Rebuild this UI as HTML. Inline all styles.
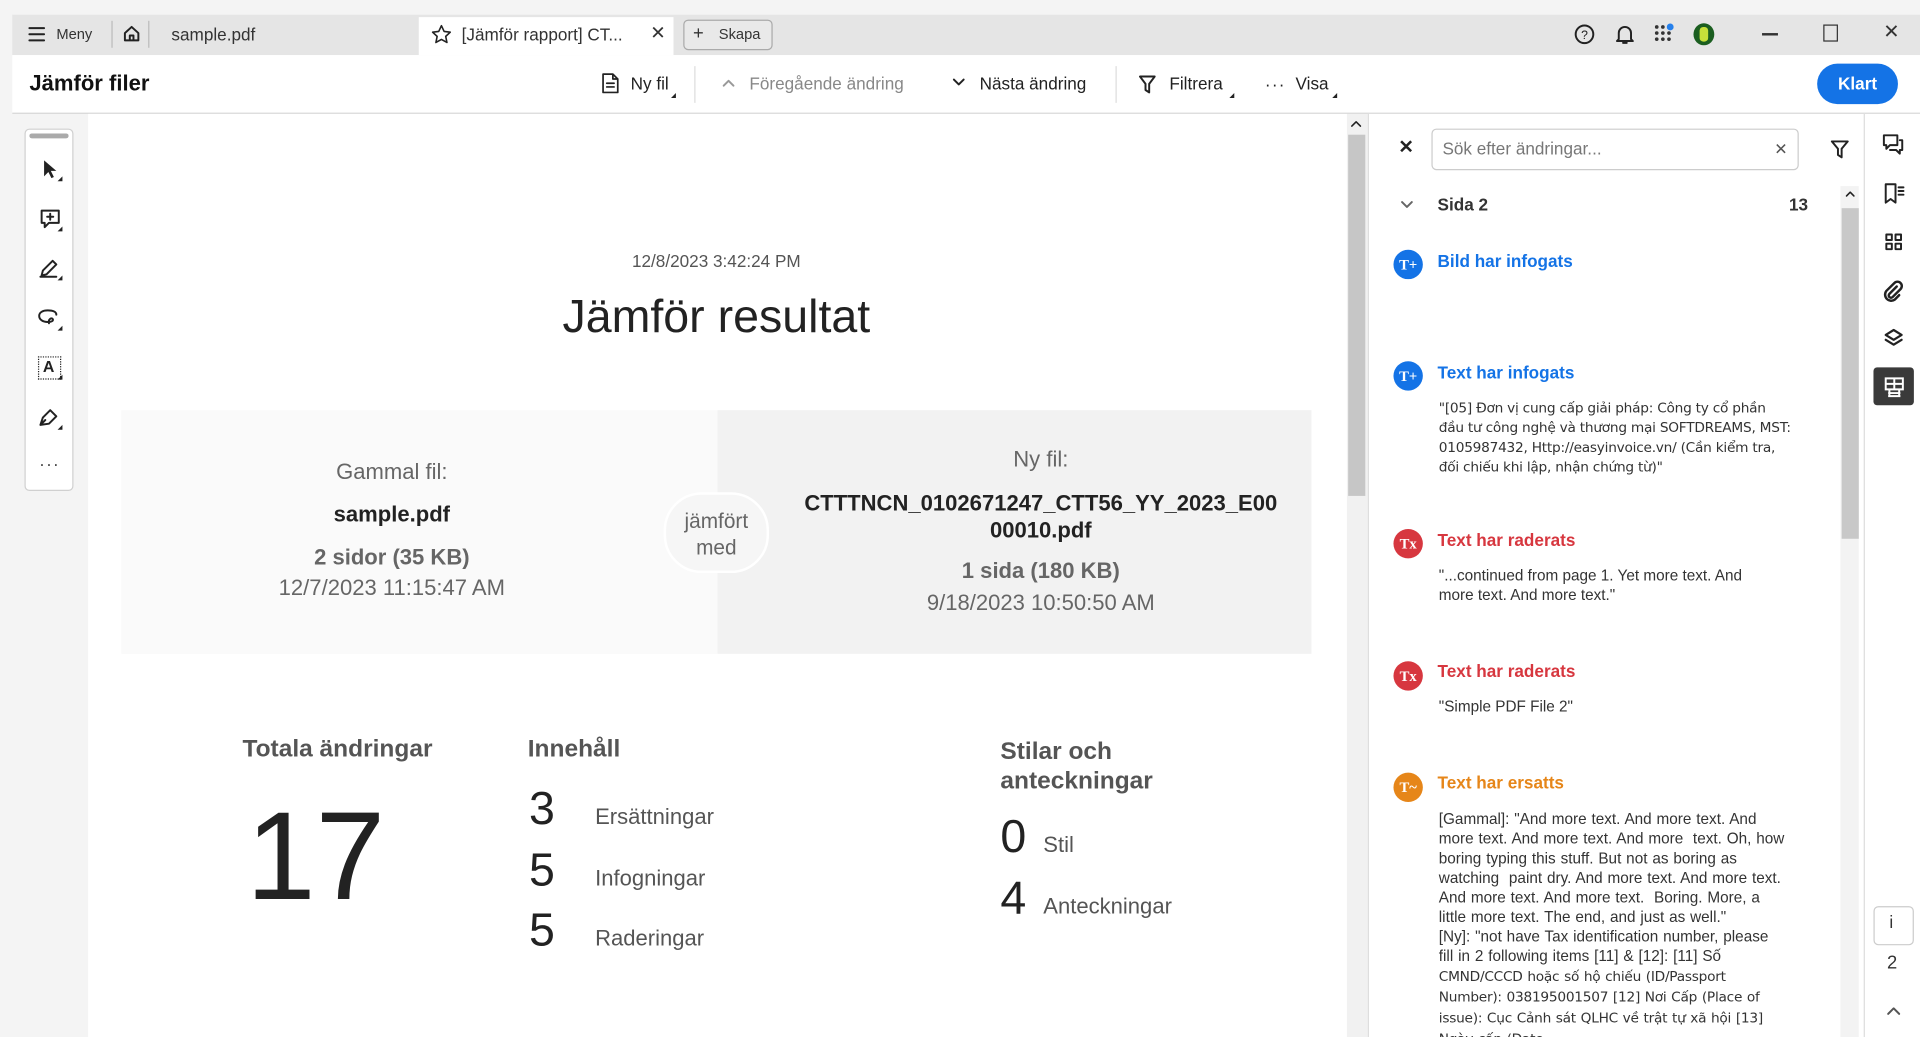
<!DOCTYPE html>
<html><head><meta charset="utf-8"><style>
html,body{margin:0;padding:0;width:1920px;height:1037px;overflow:hidden;background:#f4f4f4}
#s{position:absolute;left:0;top:0;width:1568px;height:847px;transform:scale(1.22449);transform-origin:0 0;font-family:"Liberation Sans",Arial,sans-serif;color:#222;background:#f4f4f4;overflow:hidden}
.a{position:absolute;white-space:nowrap}
.t{position:absolute;white-space:nowrap;line-height:1}
.c{text-align:center}
svg{position:absolute;overflow:visible}
.ic{stroke:#222;fill:none;stroke-width:1.6;stroke-linecap:round;stroke-linejoin:round}
.tri{position:absolute;width:0;height:0;border-left:4px solid transparent;border-bottom:4px solid #222}
.title{font-size:14px;font-weight:bold}
.body{font-size:12.5px;color:#333;line-height:16px;white-space:normal;width:300px}
.viet{font-family:"DejaVu Sans",sans-serif;font-size:11.2px;letter-spacing:-0.2px}
.circ{position:absolute;width:24px;height:24px;border-radius:50%;color:#fff;font:bold 12px "Liberation Serif",serif;text-align:center;line-height:24px}
</style></head><body><div id="s">
<div class="a" style="left:10px;top:12px;width:1558px;height:33px;background:#e5e5e5"></div>
<svg style="left:23px;top:21px" width="14" height="14"><path class="ic" d="M1 2h12M1 7h12M1 12h12"/></svg>
<div class="t" style="left:46px;top:22px;font-size:12px;color:#333">Meny</div>
<div class="a" style="left:91px;top:17px;width:1px;height:22px;background:#bbb"></div>
<svg style="left:100px;top:20px" width="15" height="15"><path class="ic" d="M2 7L7.5 2 13 7V13H2Z M6 13V9h3v4"/></svg>
<div class="a" style="left:121px;top:17px;width:1px;height:22px;background:#bbb"></div>
<div class="t" style="left:140px;top:21px;font-size:14px;color:#333">sample.pdf</div>
<div class="a" style="left:342px;top:14px;width:208px;height:31px;background:#fff"></div>
<svg style="left:352px;top:20px" width="17" height="17"><path class="ic" style="stroke-width:1.3" d="M8.5 1l2.2 4.7 5 .6-3.7 3.4 1 5L8.5 12.2 4 14.7l1-5L1.3 6.3l5-.6z"/></svg>
<div class="t" style="left:377px;top:21px;font-size:14px;color:#333">[Jämför rapport] CT...</div>
<div class="t" style="left:531px;top:20px;font-size:15px;color:#333">✕</div>
<div class="a" style="left:558px;top:16px;width:71px;height:23px;border:1px solid #aaa;border-radius:4px;background:#e9e9e9"></div>
<div class="t" style="left:566px;top:20px;font-size:15px;color:#333">+</div>
<div class="t" style="left:587px;top:22px;font-size:12px;color:#333">Skapa</div>
<svg style="left:1286px;top:20px" width="16" height="16"><circle class="ic" cx="8" cy="8" r="7.2"/><text x="8" y="12" font-size="10" text-anchor="middle" font-family="Liberation Sans" fill="#222">?</text></svg>
<svg style="left:1319px;top:19px" width="16" height="18"><path class="ic" d="M3 13V8a5 5 0 0 1 10 0v5l1.5 1.5h-13zM6.5 16h3"/></svg>
<svg style="left:1351px;top:20px" width="16" height="16"><g fill="#333"><circle cx="2" cy="2" r="1.5"/><circle cx="7" cy="2" r="1.5"/><circle cx="2" cy="7" r="1.5"/><circle cx="7" cy="7" r="1.5"/><circle cx="12" cy="7" r="1.5"/><circle cx="2" cy="12" r="1.5"/><circle cx="7" cy="12" r="1.5"/><circle cx="12" cy="12" r="1.5"/></g><circle cx="13" cy="2" r="2.8" fill="#2680eb"/></svg>
<div class="a" style="left:1383px;top:19px;width:17px;height:18px;border-radius:50%;background:#1b5e20"></div>
<div class="a" style="left:1388px;top:22px;width:7px;height:12px;border-radius:3px;background:#c6e03a"></div>
<div class="a" style="left:1439px;top:27px;width:13px;height:2px;background:#333"></div>
<div class="a" style="left:1489px;top:20px;width:10px;height:12px;border:1.5px solid #333"></div>
<div class="t" style="left:1538px;top:19px;font-size:16px;color:#333">✕</div>
<div class="a" style="left:10px;top:45px;width:1558px;height:47px;background:#fff;border-bottom:1px solid #d5d5d5"></div>
<div class="t" style="left:24px;top:59px;font-size:18px;font-weight:bold;color:#111">Jämför filer</div>
<svg style="left:491px;top:59px" width="15" height="18"><path class="ic" style="stroke-width:1.4" d="M1.5 1.5h8l4 4v11h-12z M9.5 1.5v4h4 M4.5 9h6M4.5 12h6"/></svg>
<div class="t" style="left:515px;top:61px;font-size:14px;color:#222">Ny fil</div>
<div class="tri" style="left:548px;top:76px"></div>
<div class="a" style="left:567px;top:54px;width:1px;height:30px;background:#ddd"></div>
<svg style="left:590px;top:64px" width="10" height="7"><path class="ic" style="stroke:#999" d="M1 6l4-4 4 4"/></svg>
<div class="t" style="left:612px;top:61px;font-size:14px;color:#888">Föregående ändring</div>
<svg style="left:778px;top:64px" width="10" height="7"><path class="ic" d="M1 1l4 4 4-4"/></svg>
<div class="t" style="left:800px;top:61px;font-size:14px;color:#222">Nästa ändring</div>
<div class="a" style="left:911px;top:54px;width:1px;height:30px;background:#ddd"></div>
<svg style="left:930px;top:61px" width="14" height="16"><path class="ic" d="M1 1.5h12L8.5 7.5v7l-3-2v-5z"/></svg>
<div class="t" style="left:955px;top:61px;font-size:14px;color:#222">Filtrera</div>
<div class="tri" style="left:1004px;top:76px"></div>
<div class="t" style="left:1033px;top:62px;font-size:14px;color:#222;letter-spacing:1px">···</div>
<div class="t" style="left:1058px;top:61px;font-size:14px;color:#222">Visa</div>
<div class="tri" style="left:1088px;top:76px"></div>
<div class="a" style="left:1484px;top:52px;width:66px;height:33px;border-radius:17px;background:#1473e6;color:#fff;font-weight:bold;font-size:14px;text-align:center;line-height:33px">Klart</div>
<div class="a" style="left:20px;top:105px;width:38px;height:294px;background:#fff;border:1px solid #d0d0d0;border-radius:4px"></div>
<div class="a" style="left:24px;top:109px;width:32px;height:4px;border-radius:2px;background:#aaa"></div>
<svg style="left:34px;top:130px" width="16" height="18"><path d="M2 1v13l3.5-3.5 2.5 5 2-1-2.5-5H12z" fill="#222"/></svg>
<div class="tri" style="left:47px;top:144px"></div>
<svg style="left:32px;top:170px" width="18" height="18"><path class="ic" d="M2 2h14v10H8l-3.5 3.5V12H2z M9 4.5v5M6.5 7h5"/></svg>
<div class="tri" style="left:47px;top:185px"></div>
<svg style="left:31px;top:210px" width="18" height="18"><path class="ic" d="M3 15l1-4 8-8 3 3-8 8z M2 16h13" /></svg>
<div class="tri" style="left:47px;top:225px"></div>
<svg style="left:31px;top:252px" width="18" height="16"><path class="ic" d="M15 5c0-2.5-3-3.5-7-3.5S1 3 1 6s3 5 7 5c3 0 5-1 4-2.5S8 9 9 12"/></svg>
<div class="tri" style="left:47px;top:266px"></div>
<div class="a" style="left:31px;top:291px;width:17px;height:17px;border:1.5px dotted #222"></div>
<div class="t" style="left:35px;top:293px;font-size:13px;font-weight:bold">A</div>
<div class="tri" style="left:47px;top:306px"></div>
<svg style="left:31px;top:332px" width="18" height="18"><path class="ic" d="M2 15l2-6 6-6 5 5-6 6z M2 15l4-4"/></svg>
<div class="tri" style="left:47px;top:347px"></div>
<div class="t" style="left:32px;top:372px;font-size:14px;color:#444;letter-spacing:1px">···</div>
<div class="a" style="left:72px;top:93px;width:1028px;height:754px;background:#fff"></div>
<div class="a" style="left:1100px;top:93px;width:17px;height:754px;background:#f1f1f1"></div>
<div class="a" style="left:1101px;top:110px;width:14px;height:295px;background:#c6c6c6"></div>
<svg style="left:1103px;top:98px" width="9" height="6"><path class="ic" style="stroke-width:1.3" d="M1 5l3.5-3.5L8 5"/></svg>
<div class="t c" style="left:385px;top:206px;width:400px;font-size:14px;color:#555">12/8/2023 3:42:24 PM</div>
<div class="t c" style="left:285px;top:240px;width:600px;font-size:38px;color:#222">Jämför resultat</div>
<div class="a" style="left:99px;top:335px;width:487px;height:199px;background:#fafafa"></div>
<div class="a" style="left:586px;top:335px;width:485px;height:199px;background:#f2f2f2"></div>
<div class="a" style="left:542px;top:402px;width:82px;height:62px;border-radius:31px;background:#f6f6f6;border:2px solid #fff"></div>
<div class="t c" style="left:535px;top:415px;width:100px;font-size:17px;color:#666;line-height:22px">jämfört<br>med</div>
<div class="t c" style="left:170px;top:376px;width:300px;font-size:18px;color:#666">Gammal fil:</div>
<div class="t c" style="left:170px;top:411px;width:300px;font-size:18px;font-weight:bold;color:#222">sample.pdf</div>
<div class="t c" style="left:170px;top:446px;width:300px;font-size:18px;font-weight:bold;color:#666">2 sidor (35 KB)</div>
<div class="t c" style="left:170px;top:471px;width:300px;font-size:18px;color:#666">12/7/2023 11:15:47 AM</div>
<div class="t c" style="left:650px;top:366px;width:400px;font-size:18px;color:#666">Ny fil:</div>
<div class="t c" style="left:630px;top:400px;width:440px;font-size:18px;font-weight:bold;color:#222;line-height:22px">CTTTNCN_0102671247_CTT56_YY_2023_E00<br>00010.pdf</div>
<div class="t c" style="left:650px;top:457px;width:400px;font-size:18px;font-weight:bold;color:#666">1 sida (180 KB)</div>
<div class="t c" style="left:650px;top:483px;width:400px;font-size:18px;color:#666">9/18/2023 10:50:50 AM</div>
<div class="t" style="left:198px;top:602px;font-size:20px;font-weight:bold;color:#555">Totala ändringar</div>
<div class="t" style="left:201px;top:648px;font-size:102px;color:#222">17</div>
<div class="t" style="left:431px;top:602px;font-size:20px;font-weight:bold;color:#555">Innehåll</div>
<div class="t" style="left:432px;top:642px;font-size:38px;color:#222">3</div>
<div class="t" style="left:486px;top:658px;font-size:18px;color:#555">Ersättningar</div>
<div class="t" style="left:432px;top:692px;font-size:38px;color:#222">5</div>
<div class="t" style="left:486px;top:708px;font-size:18px;color:#555">Infogningar</div>
<div class="t" style="left:432px;top:741px;font-size:38px;color:#222">5</div>
<div class="t" style="left:486px;top:757px;font-size:18px;color:#555">Raderingar</div>
<div class="t" style="left:817px;top:602px;font-size:20px;font-weight:bold;color:#555;line-height:24px">Stilar och<br>anteckningar</div>
<div class="t" style="left:817px;top:665px;font-size:38px;color:#222">0</div>
<div class="t" style="left:852px;top:681px;font-size:18px;color:#555">Stil</div>
<div class="t" style="left:817px;top:715px;font-size:38px;color:#222">4</div>
<div class="t" style="left:852px;top:731px;font-size:18px;color:#555">Anteckningar</div>
<div class="a" style="left:1117px;top:93px;width:405px;height:754px;background:#fff;border-left:1px solid #ddd"></div>
<div class="t" style="left:1142px;top:113px;font-size:15px;font-weight:bold;color:#222">✕</div>
<div class="a" style="left:1169px;top:105px;width:298px;height:32px;border:1px solid #ccc;border-radius:4px;background:#fff"></div>
<div class="t" style="left:1178px;top:114px;font-size:14px;color:#777">Sök efter ändringar...</div>
<div class="t" style="left:1449px;top:115px;font-size:13px;color:#555">✕</div>
<svg style="left:1495px;top:114px" width="15" height="16"><path class="ic" d="M1 1.5h13L9 7.5v7l-3-2v-5z"/></svg>
<div class="a" style="left:1503px;top:152px;width:15px;height:695px;background:#f3f3f3"></div>
<div class="a" style="left:1504px;top:170px;width:14px;height:270px;background:#c8c8c8"></div>
<svg style="left:1507px;top:155px" width="8" height="6"><path class="ic" style="stroke-width:1.3" d="M1 5l3-3 3 3"/></svg>
<svg style="left:1144px;top:164px" width="10" height="6"><path class="ic" style="stroke:#666" d="M1 1l4 4 4-4"/></svg>
<div class="t" style="left:1174px;top:160px;font-size:14px;font-weight:bold;color:#333">Sida 2</div>
<div class="t" style="left:1461px;top:160px;font-size:14px;font-weight:bold;color:#333">13</div>
<div class="circ" style="left:1138px;top:204px;background:#1473e6">T+</div>
<div class="t title" style="left:1174px;top:206px;color:#1473e6">Bild har infogats</div>
<div class="circ" style="left:1138px;top:295px;background:#1473e6">T+</div>
<div class="t title" style="left:1174px;top:297px;color:#1473e6">Text har infogats</div>
<div class="a body viet" style="left:1175px;top:326px;width:288px">"[05] Đơn vị cung cấp giải pháp: Công ty cổ phần đầu tư công nghệ và thương mại SOFTDREAMS, MST: 0105987432, Http://easyinvoice.vn/ (Cần kiểm tra, đối chiếu khi lập, nhận chứng từ)"</div>
<div class="circ" style="left:1138px;top:432px;background:#d7373f">Tx</div>
<div class="t title" style="left:1174px;top:434px;color:#d7373f">Text har raderats</div>
<div class="a body" style="left:1175px;top:462px;width:275px">"...continued from page 1. Yet more text. And more text. And more text."</div>
<div class="circ" style="left:1138px;top:540px;background:#d7373f">Tx</div>
<div class="t title" style="left:1174px;top:541px;color:#d7373f">Text har raderats</div>
<div class="a body" style="left:1175px;top:569px">"Simple PDF File 2"</div>
<div class="circ" style="left:1138px;top:631px;background:#e68619">T~</div>
<div class="t title" style="left:1174px;top:632px;color:#e68619">Text har ersatts</div>
<div class="a body" style="left:1175px;top:661px;width:284px;word-spacing:0.5px">[Gammal]: "And more text. And more text. And more text. And more text. And more&nbsp; text. Oh, how boring typing this stuff. But not as boring as watching&nbsp; paint dry. And more text. And more text. And more text. And more text.&nbsp; Boring. More, a little more text. The end, and just as well."<br>[Ny]: "not have Tax identification number, please fill in 2 following items [11] &amp; [12]: [11] Số <span class="viet">CMND/CCCD hoặc số hộ chiếu (ID/Passport Number): 038195001507 [12] Nơi Cấp (Place of issue): Cục Cảnh sát QLHC về trật tự xã hội [13] Ngày cấp (Date</span></div>
<div class="a" style="left:1522px;top:93px;width:46px;height:754px;background:#fff;border-left:1px solid #ddd"></div>
<svg style="left:1537px;top:109px" width="18" height="18"><path class="ic" d="M1.5 1.5h11v8h-6l-3 3v-3h-2z M14.5 5.5h2v8h-2v3l-3-3h-5"/></svg>
<svg style="left:1538px;top:149px" width="18" height="18"><path class="ic" d="M2 1.5h8v15l-4-3-4 3z M12.5 4h4M12.5 7h4M12.5 10h4"/></svg>
<svg style="left:1539px;top:190px" width="15" height="15"><path class="ic" d="M1.5 1.5h4.5v4.5h-4.5z M9 1.5h4.5v4.5H9z M1.5 9h4.5v4.5h-4.5z M9 9h4.5v4.5H9z"/></svg>
<svg style="left:1538px;top:229px" width="16" height="17"><path class="ic" style="stroke-width:2" d="M11 5l-6 6a1.8 1.8 0 0 0 2.6 2.6l6.5-6.5a3.5 3.5 0 0 0-5-5L2.5 8.6a5 5 0 0 0 7 7L13 12"/></svg>
<svg style="left:1538px;top:268px" width="17" height="17"><path class="ic" style="stroke-width:1.8" d="M8.5 1.5l6.5 4-6.5 4-6.5-4z M2 9.5l6.5 4 6.5-4"/></svg>
<div class="a" style="left:1530px;top:300px;width:33px;height:31px;border-radius:3px;background:#3a3a3a"></div>
<svg style="left:1538px;top:307px" width="18" height="18"><path d="M2 2h14v9H2z M9 2v9 M2 6.5h14 M4 14h10M4 16.5h10M5 11v6M13 11v6" fill="none" stroke="#fff" stroke-width="1.6"/></svg>
<div class="a" style="left:1530px;top:740px;width:31px;height:30px;border:1px solid #ccc;border-radius:4px;background:#fff"></div>
<div class="t" style="left:1543px;top:746px;font-size:14px;color:#333">i</div>
<div class="t" style="left:1541px;top:779px;font-size:15px;color:#333">2</div>
<svg style="left:1541px;top:822px" width="11" height="7"><path class="ic" style="stroke:#555" d="M1 6l4.5-4.5L10 6"/></svg>
</div></body></html>
